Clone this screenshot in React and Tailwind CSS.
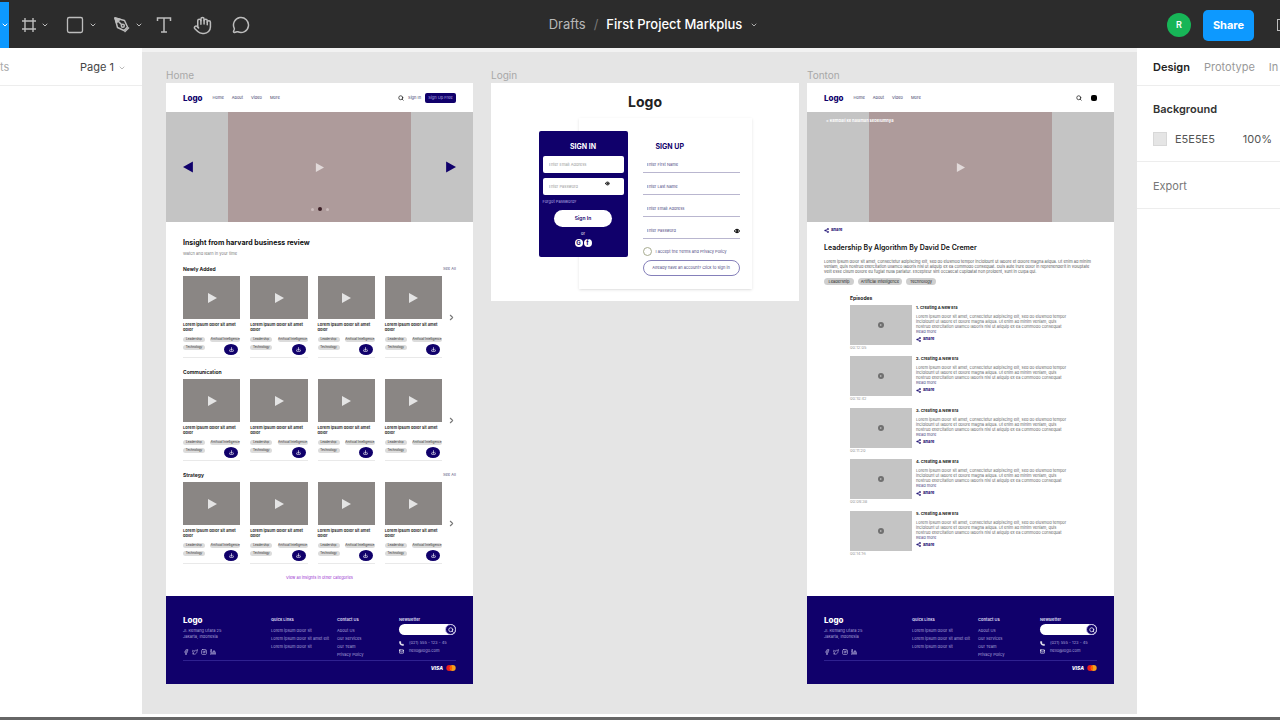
import React from "react";
import { ChevronDown, ChevronRight, Search, Share2, Eye, Phone, Mail, Facebook, Twitter, Instagram, Linkedin, Download, Hand, MessageCircle, Square } from "lucide-react";

function ToolButton({ label, caret, children }) {
  return (
    <button aria-label={label} className="flex items-center gap-1 text-[#bdbdbd]">
      {children}
      {caret && <ChevronDown className="size-2" strokeWidth={3} />}
    </button>
  );
}

function FrameIcon() {
  return (
    <svg viewBox="0 0 16 16" className="size-4" fill="none" stroke="currentColor" strokeWidth="1.4">
      <path d="M4 1v14M12 1v14M1 4h14M1 12h14" />
    </svg>
  );
}

function PenIcon() {
  return (
    <svg viewBox="0 0 18 18" className="size-[18px]" fill="none" stroke="currentColor" strokeWidth="1.5" strokeLinejoin="round">
      <path d="M2 2l9.500 2.500 3 6.500-3.500 3.500-6.500-3z" />
      <path d="M2 2l7 7" />
      <circle cx="9.800" cy="9.800" r="1.500" />
      <path d="M11.500 16l4.500-4.500" />
      <path d="M2 2l5 1.300-3.500 3.500z" fill="currentColor" />
    </svg>
  );
}

function TextToolIcon() {
  return (
    <svg viewBox="0 0 18 18" className="size-[18px]" fill="none" stroke="currentColor" strokeWidth="1.5">
      <path d="M2.500 5V2h13v3M9 2v14M6 16h6" />
    </svg>
  );
}

function Toolbar() {
  return (
    <header className="flex h-12 shrink-0 items-end overflow-hidden bg-[#2c2c2c]">
      <div className="flex h-[46px] flex-1 items-center">
        <button aria-label="Move" className="mr-3 flex h-full w-[9px] items-center justify-center bg-[#0d99ff] text-white">
          <ChevronDown className="size-2" strokeWidth={3} />
        </button>
        <div className="flex items-center gap-4">
          <ToolButton label="Frame" caret><FrameIcon /></ToolButton>
          <ToolButton label="Shape" caret><Square className="size-[20px]" strokeWidth={1.600} /></ToolButton>
          <ToolButton label="Pen" caret><PenIcon /></ToolButton>
        </div>
        <div className="ml-3 flex items-center gap-5">
          <ToolButton label="Text"><TextToolIcon /></ToolButton>
          <ToolButton label="Hand"><Hand className="size-[19px]" strokeWidth={1.900} /></ToolButton>
          <ToolButton label="Comment"><MessageCircle className="size-[18px]" strokeWidth={2} /></ToolButton>
        </div>
      </div>
      <div className="flex h-[46px] items-center gap-2 pl-[27px] text-[13px] text-white">
        <a href="#drafts" className="text-[#b8b8b8]">Drafts</a>
        <span className="text-[#777]">/</span>
        <button className="flex items-center gap-2 font-medium">
          First Project Markplus
          <ChevronDown className="size-2 text-[#aaa]" strokeWidth={3} />
        </button>
      </div>
      <div className="flex h-[46px] flex-1 items-center justify-end">
        <span className="flex size-6 items-center justify-center rounded-full bg-[#17b557] text-[9px] font-semibold text-white">R</span>
        <button className="ml-3 h-[31px] w-[51px] rounded-[5px] bg-[#0d99ff] text-[11px] font-bold text-white">Share</button>
        <span className="ml-[23px] h-3 w-[3px] border-y border-l border-[#bdbdbd]" />
      </div>
    </header>
  );
}

function LeftPanel() {
  return (
    <aside className="w-[142px] shrink-0 bg-white">
      <div className="flex h-[38px] items-center justify-between border-b border-[#ededed] pt-[2px] pr-4 text-[11px]">
        <span className="text-[#aaa]">ts</span>
        <button className="flex items-center gap-1 text-[#444]">
          Page 1
          <ChevronDown className="size-2 text-[#999]" />
        </button>
      </div>
    </aside>
  );
}

function RightPanel() {
  return (
    <aside className="w-[143px] shrink-0 overflow-hidden bg-white text-[11px] text-[#555]">
      <div className="flex h-[38px] items-center gap-[14px] border-b border-[#ededed] pt-[2px] pl-4 text-[#999]">
        <button className="font-semibold text-[#222]">Design</button>
        <button>Prototype</button>
        <button>In</button>
      </div>
      <section className="flex h-[76px] flex-col gap-4 border-b border-[#ededed] pt-4 pl-4">
        <h2 className="leading-[14px] font-semibold text-[#333]">Background</h2>
        <div className="flex items-center pr-2 leading-[14px]">
          <span className="mr-2 size-[14px] border border-[#d8d8d8] bg-[#e5e5e5]" />
          <span className="flex-1">E5E5E5</span>
          <span>100%</span>
        </div>
      </section>
      <section className="flex h-[47px] items-center border-b border-[#ededed] pt-[2px] pl-4">
        <h2 className="text-[#777]">Export</h2>
      </section>
    </aside>
  );
}

function Frame({ name, width, children }) {
  return (
    <section className={"flex shrink-0 flex-col " + width}>
      <h2 className="mb-[1px] h-[14px] text-[10px] leading-[14px] text-[#a8a8a8]">{name}</h2>
      <div className="flex flex-col bg-white">{children}</div>
    </section>
  );
}

function Play({ className }) {
  return (
    <svg viewBox="0 0 10 10" className={className} fill="currentColor">
      <path d="M1 0l9 5-9 5z" />
    </svg>
  );
}

function SiteNav({ children }) {
  return (
    <nav className="flex h-[29px] items-center px-[17px] text-[4px] leading-[6px] text-[#3b3868]">
      <span className="mr-[10px] text-[8px] font-extrabold text-[#10006b]">Logo</span>
      <div className="flex flex-1 gap-[8px]">
        <a href="#home">Home</a>
        <a href="#about">About</a>
        <a href="#video">Video</a>
        <a href="#more">More</a>
      </div>
      <div className="flex items-center gap-[4px]">{children}</div>
    </nav>
  );
}

function VideoCard() {
  return (
    <article className="border-b border-[#e9e9e9]">
      <div className="flex h-[43px] items-center justify-center bg-[#8a8684]">
        <Play className="size-[10px] text-[#e4e4e4]" />
      </div>
      <h4 className="mt-[3px] h-[10px] text-[4px] leading-[5px] font-bold text-[#333]">Lorem ipsum dolor sit amet dolor</h4>
      <div className="mt-[5px] flex justify-between text-[3px] leading-[5px] text-[#333]">
        <span className="w-[22px] rounded-full bg-[#dcdcdc] text-center">Leadership</span>
        <span className="w-[30px] rounded-full bg-[#dcdcdc] text-center">Artificial Intelligence</span>
      </div>
      <div className="mt-[2px] flex h-[13px] justify-between text-[3px] leading-[5px] text-[#333]">
        <span className="mt-[1px] h-[5px] w-[22px] rounded-full bg-[#dcdcdc] text-center">Technology</span>
        <button aria-label="Save video" className="mr-[2px] flex h-[11px] w-[14px] items-center justify-center rounded-[50%] bg-[#10006b] text-white">
          <Download className="size-[5px]" strokeWidth={3} />
        </button>
      </div>
    </article>
  );
}

function VideoSection({ title, seeAll }) {
  return (
    <section className="h-[103px]">
      <div className="flex h-[6px] items-center justify-between leading-[6px]">
        <h3 className="text-[5px] font-bold text-[#222]">{title}</h3>
        {seeAll && <a href="#all" className="text-[4px] text-[#5a5880]">See All</a>}
      </div>
      <div className="mt-[4px] flex items-center">
        <div className="grid flex-1 grid-cols-4 gap-[10px]">
          {[0, 1, 2, 3].map((i) => <VideoCard key={i} />)}
        </div>
        <button aria-label={"More " + title} className="flex w-[14px] justify-end text-[#777]">
          <ChevronRight className="size-[9px]" strokeWidth={3} />
        </button>
      </div>
    </section>
  );
}

function FooterList({ title, items, width }) {
  return (
    <div className={width}>
      <h4 className="mb-[3px] text-[4px] leading-[8px] font-bold text-[#cfcbe8]">{title}</h4>
      <ul className="leading-[8px] whitespace-nowrap">
        {items.map((t) => <li key={t}><a href="#link">{t}</a></li>)}
      </ul>
    </div>
  );
}

function SiteFooter() {
  return (
    <footer className="h-[88px] bg-[#10006b] px-[17px] pt-[20px] text-[4px] text-[#a9a2d8]">
      <div className="flex h-[45px] border-b border-[#2f2190]">
        <div className="w-[88px]">
          <p className="text-[8px] leading-[8px] font-extrabold text-white">Logo</p>
          <p className="mt-[4px] leading-[6px]">Jl. Kemang Utara 25<br />Jakarta, Indonesia</p>
          <div className="mt-[9px] flex gap-[3px] text-[#dcd8f4]">
            <Facebook className="size-[6px]" />
            <Twitter className="size-[6px]" />
            <Instagram className="size-[6px]" />
            <Linkedin className="size-[6px]" />
          </div>
        </div>
        <FooterList width="w-[66px]" title="Quick Links" items={["Lorem ipsum dolor sit", "Lorem ipsum dolor sit amet elit", "Lorem ipsum dolor sit "]} />
        <FooterList width="flex-1" title="Contact Us" items={["About Us", "Our Services", "Our Team", "Privacy Policy"]} />
        <div className="w-[57px]">
          <h4 className="text-[4px] leading-[8px] font-bold text-[#cfcbe8]">Newsletter</h4>
          <div className="flex h-[11px] items-center justify-end rounded-full bg-white">
            <input aria-label="Newsletter email" className="w-10 bg-transparent text-[4px] text-[#10006b] outline-none" />
            <button aria-label="Subscribe" className="flex size-[11px] items-center justify-center rounded-full border border-[#c9c4ea] bg-[#10006b] text-white">
              <Search className="size-[6px]" strokeWidth={3} />
            </button>
          </div>
          <p className="mt-[4px] flex items-center gap-[5px] leading-[8px]"><Phone className="size-[5px] text-white" fill="currentColor" />(021) 555 - 123 - 45</p>
          <p className="flex items-center gap-[5px] leading-[8px]"><Mail className="size-[5px] text-white" strokeWidth={3} />hello@logo.com</p>
        </div>
      </div>
      <div className="mt-[4px] flex items-center justify-end gap-[3px]">
        <span className="text-[5px] leading-[6px] font-extrabold text-white italic">VISA</span>
        <svg viewBox="0 0 11 7" className="h-[6px] w-[10px]">
          <circle cx="3.500" cy="3.500" r="3.500" fill="#eb1c1c" />
          <circle cx="7.500" cy="3.500" r="3.500" fill="#f59e1b" />
          <path d="M5.500 .7a3.500 3.500 0 0 1 0 5.600a3.500 3.500 0 0 1 0-5.600z" fill="#ff5f00" />
        </svg>
      </div>
    </footer>
  );
}

function HomeFrame() {
  return (
    <Frame name="Home" width="w-[307px]">
      <SiteNav>
        <Search className="size-[6px] text-[#222]" strokeWidth={3} />
        <a href="#signin">Sign In</a>
        <button className="h-[10px] w-[31px] rounded-[2px] bg-[#10006b] text-[4px] text-[#b6afe6]">Sign Up Free</button>
      </SiteNav>
      <div className="flex h-[110px] items-center justify-between bg-[#c4c4c4] px-[17px]">
        <button aria-label="Previous" className="rotate-180 text-[#10006b]"><Play className="h-3 w-[11px]" /></button>
        <div className="flex h-full w-[183px] flex-col items-center justify-between bg-[#ae9b9b] pb-[11px]">
          <span />
          <Play className="mt-[15px] size-[9px] text-[#e2dada]" />
          <div className="flex items-center gap-[4px]">
            <span className="size-[3px] rounded-full bg-[#cbbcbc]" />
            <span className="size-[4px] rounded-full bg-[#3b1f26]" />
            <span className="size-[3px] rounded-full bg-[#cbbcbc]" />
          </div>
        </div>
        <button aria-label="Next" className="text-[#10006b]"><Play className="h-3 w-[11px]" /></button>
      </div>
      <div className="px-[17px] pt-[16px]">
        <h3 className="text-[7px] leading-[10px] font-bold text-[#111]">Insight from harvard business review</h3>
        <p className="mt-[3px] mb-[9px] text-[4px] leading-[6px] text-[#777]">Watch and learn in your time</p>
        <VideoSection title="Newly Added" seeAll />
        <VideoSection title="Communication" />
        <VideoSection title="Strategy" seeAll />
        <p className="mb-[15px] text-center text-[4px] leading-[6px]">
          <a href="#categories" className="text-[#9a2fd0]">View all insights in other categories</a>
        </p>
      </div>
      <SiteFooter />
    </Frame>
  );
}

function SignInField({ label, type, icon }) {
  return (
    <div className="flex h-[17px] items-center rounded-[2px] bg-white px-[6px]">
      <input type={type} aria-label={label} placeholder={label} className="w-0 flex-1 text-[4px] leading-[6px] text-[#333] outline-none placeholder:text-[#999]" />
      {icon && <Eye className="mr-[8px] mb-[6px] size-[5px] text-black" strokeWidth={4} />}
    </div>
  );
}

function SignUpField({ label, type, icon }) {
  return (
    <div className="flex h-[22px] items-center border-b border-[#b9b6cf] pt-[6px]">
      <input type={type} aria-label={label} placeholder={label} className="w-0 flex-1 pl-[4px] text-[4px] leading-[6px] text-[#333] outline-none placeholder:text-[#4b4780]" />
      {icon && <Eye className="size-[6px] text-black" strokeWidth={4} />}
    </div>
  );
}

function LoginFrame() {
  return (
    <Frame name="Login" width="w-[308px]">
      <h3 className="mt-[10px] text-center text-[14px] leading-[18px] font-bold text-[#222]">Logo</h3>
      <div className="mt-[7px] mb-[12px] flex justify-center">
        <form className="relative z-10 mt-[13px] flex h-[126px] w-[89px] flex-col rounded-[2px] bg-[#10006b] px-[4px] pt-[12px]">
          <h4 className="text-center text-[7px] leading-[8px] font-bold text-white">SIGN IN</h4>
          <div className="mt-[5px] flex flex-col gap-[5px]">
            <SignInField label="Enter Email Address" type="email" />
            <SignInField label="Enter Password" type="password" icon />
          </div>
          <a href="#forgot" className="mt-[4px] text-[4px] leading-[6px] text-[#b6afe6]">Forgot Password?</a>
          <button type="button" className="mt-[5px] h-[17px] w-[58px] self-center rounded-full bg-white text-[5px] font-semibold text-[#10006b]">Sign In</button>
          <span className="mt-[4px] text-center text-[4px] leading-[6px] text-white">or</span>
          <div className="mt-[2px] flex justify-center gap-[1px] text-[6px] leading-[8px] font-bold text-[#10006b]">
            <button type="button" className="size-[8px] rounded-full bg-white leading-[8px]">G</button>
            <button type="button" className="size-[8px] rounded-full bg-white leading-[8px]">f</button>
          </div>
        </form>
        <form className="-ml-[49px] flex h-[171px] w-[173px] flex-col bg-white pt-[25px] pr-[12px] pl-[64px] shadow-sm">
          <h4 className="pl-[13px] text-[7px] leading-[8px] font-bold text-[#10006b]">SIGN UP</h4>
          <div className="flex flex-col">
            <SignUpField label="Enter First Name" type="text" />
            <SignUpField label="Enter Last Name" type="text" />
            <SignUpField label="Enter Email Address" type="email" />
            <SignUpField label="Enter Password" type="password" icon />
          </div>
          <label className="mt-[8px] flex items-center gap-[4px] text-[4px] leading-[9px] whitespace-nowrap text-[#4b4780]">
            <input type="checkbox" className="size-[9px] shrink-0 appearance-none rounded-full border border-[#a7ab8f]" />
            I accept the Terms and Privacy Policy
          </label>
          <button type="button" className="mt-[4px] h-[16px] rounded-full border border-[#8580ba] text-[4px] whitespace-nowrap text-[#4b4780]">Already have an account? Click to sign in</button>
        </form>
      </div>
    </Frame>
  );
}

function ShareLink() {
  return (
    <button className="flex items-center gap-[2px] text-[4px] leading-[6px] font-bold text-[#10006b]">
      <Share2 className="size-[5px]" strokeWidth={3} />
      Share
    </button>
  );
}

function Episode({ number, time }) {
  return (
    <article className="flex gap-[4px]">
      <div className="w-[62px]">
        <div className="flex h-[40px] items-center justify-center bg-[#c4c4c4]">
          <span className="flex size-[6px] items-center justify-center rounded-full bg-[#707070]">
            <Play className="size-[2px] text-[#ccc]" />
          </span>
        </div>
        <p className="text-[4px] leading-[6px] text-[#999]">{time}</p>
      </div>
      <div className="flex-1">
        <h4 className="mb-[3px] text-[4px] leading-[6px] font-bold text-[#222]">{number}. Creating A New Era</h4>
        <p className="text-[4px] leading-[5px] text-[#666]">
          Lorem ipsum dolor sit amet, consectetur adipiscing elit, sed do eiusmod tempor incididunt ut labore et dolore magna aliqua. Ut enim ad minim veniam, quis nostrud exercitation ullamco laboris nisi ut aliquip ex ea commodo consequat
        </p>
        <a href="#more" className="block text-[4px] leading-[5px] text-[#4b4780]">Read more</a>
        <div className="mt-[2px]"><ShareLink /></div>
      </div>
    </article>
  );
}

const episodeTimes = ["00:12:05", "00:10:42", "00:11:20", "00:09:38", "00:14:16"];

function WatchFrame() {
  return (
    <Frame name="Tonton" width="w-[307px]">
      <SiteNav>
        <Search className="mr-[5px] size-[6px] text-[#222]" strokeWidth={3} />
        <span className="size-[6px] rounded-[2px] bg-black" />
      </SiteNav>
      <div className="relative flex h-[110px] items-center justify-center bg-[#c4c4c4]">
        <div className="flex h-full w-[183px] items-center justify-center bg-[#ae9b9b]">
          <Play className="size-[9px] text-[#e2dada]" />
        </div>
        <a href="#back" className="absolute top-[6px] left-[19px] text-[4px] leading-[6px] font-bold text-white">&lt; Kembali ke halaman sebelumnya</a>
      </div>
      <div className="h-[374px] px-[17px] pt-[5px]">
        <ShareLink />
        <h3 className="mt-[10px] text-[7px] leading-[10px] font-semibold text-[#111]">Leadership By Algorithm By David De Cremer</h3>
        <p className="mt-[6px] text-[4px] leading-[5px] text-[#555]">
          Lorem ipsum dolor sit amet, consectetur adipiscing elit, sed do eiusmod tempor incididunt ut labore et dolore magna aliqua. Ut enim ad minim veniam, quis nostrud exercitation ullamco laboris nisi ut aliquip ex ea commodo consequat. Duis aute irure dolor in reprehenderit in voluptate velit esse cillum dolore eu fugiat nulla pariatur. Excepteur sint occaecat cupidatat non proident, sunt in culpa qui.
        </p>
        <div className="mt-[4px] flex gap-[4px] text-center text-[4px] leading-[7px] text-[#222]">
          <span className="w-[30px] rounded-full bg-[#cfcfcf]">Leadership</span>
          <span className="w-[44px] rounded-full bg-[#cfcfcf]">Artificial Intelligence</span>
          <span className="w-[30px] rounded-full bg-[#cfcfcf]">Technology</span>
        </div>
        <div className="mt-[10px] pr-[29px] pl-[26px]">
          <h3 className="mb-[4px] text-[5px] leading-[6px] font-bold text-[#222]">Episodes</h3>
          <div className="grid h-[257px] grid-rows-5">
            {episodeTimes.map((time, i) => <Episode key={time} number={i + 1} time={time} />)}
          </div>
        </div>
      </div>
      <SiteFooter />
    </Frame>
  );
}

export default function App() {
  return (
    <div className="flex h-screen flex-col overflow-hidden bg-white font-['Inter','Liberation_Sans',sans-serif]">
      <Toolbar />
      <div className="flex min-h-0 flex-1">
        <LeftPanel />
        <main className="flex min-w-0 flex-1 items-start overflow-hidden border-t-4 border-[#f2f2f2] bg-[#e5e5e5] pt-[16px] pl-[24px]">
          <HomeFrame />
          <div className="ml-[18px] flex gap-[8px]">
            <LoginFrame />
            <WatchFrame />
          </div>
        </main>
        <RightPanel />
      </div>
      <div className="h-[6px] shrink-0 border-b-3 border-[#666] bg-white" />
    </div>
  );
}
